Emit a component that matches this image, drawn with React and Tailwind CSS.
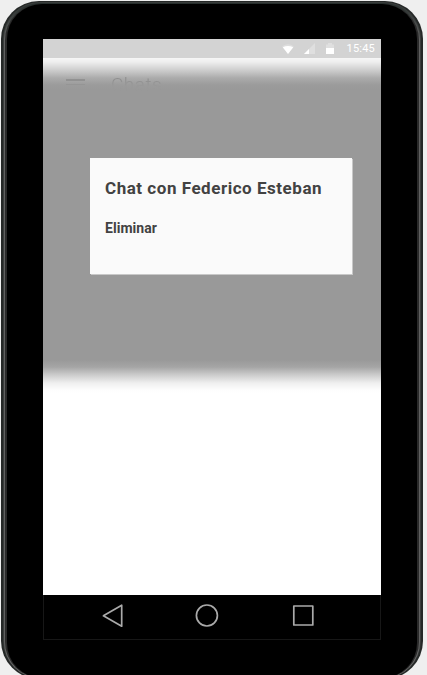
function StatusBar() {
  return (
    <div className="relative flex h-[19px] shrink-0 items-center justify-end bg-[#d3d3d3] pr-[6px] text-white">
      <svg className="mr-[9px] h-[12px] w-[14px]" viewBox="0 0 14 12">
        <path d="M1 3.4Q7-.8 13 3.4L7 11Z" fill="#dddddd" />
        <path d="M1.8 4.2Q7 1.8 12.2 4.2L7 11Z" fill="#fff" />
      </svg>
      <svg className="mr-[11px] h-[12px] w-[11px]" viewBox="0 0 11 12">
        <path d="M0 11L11 0V11Z" fill="#dfdfdf" />
        <path d="M0 11L5 6V11Z" fill="#fff" />
      </svg>
      <svg className="h-[12px] w-[8px]" viewBox="0 0 8 12">
        <path d="M0 5V1.5H2V0H6V1.5H8V5Z" fill="#dfdfdf" />
        <path d="M0 5H8V11H0Z" fill="#fff" />
      </svg>
      <span className="w-[41px] whitespace-nowrap pt-px text-right text-[11px] leading-[18px] tracking-[0.2px]">15:45</span>
    </div>
  );
}

function Dialog() {
  return (
    <div className="ml-[47px] mt-[100px] h-[116px] w-[262px] bg-[#fafafa] pl-[15px] pt-[20px] text-[#424242] shadow-[1px_1px_0_#c8c8c8]">
      <h1 className="whitespace-nowrap text-[17px] font-bold leading-[21px] tracking-[0.53px]">Chat con Federico Esteban</h1>
      <p className="mt-[19px] text-[14px] font-bold leading-[20px] tracking-[0.04px]">Eliminar</p>
    </div>
  );
}

function Screen() {
  return (
    <div className="relative flex h-[537px] flex-col bg-[linear-gradient(to_bottom,#f6f6f6_0px,#eeeeee_4px,#cecece_12px,#ababab_20px,#9b9b9b_27px,#999999_32px,#999999_302px,#a5a5a5_309px,#cccccc_317px,#efefef_325px,#fdfdfd_332px,#ffffff_336px)]">
      <div className="absolute left-[23px] top-[21px] h-[6px] w-[19px] border-t-2 border-b border-t-[#919191] border-b-[#959595]" />
      <div className="absolute left-[68px] top-[16px] bg-[linear-gradient(to_bottom,#8e8e8e_5px,#949494_9px,#999999_12px)] bg-clip-text text-[19px] font-light leading-[22px] tracking-[0.5px] text-transparent">Chats</div>
      <Dialog />
    </div>
  );
}

function Navigation() {
  return (
    <div className="flex h-[45px] items-start border border-t-0 border-[#171717] pt-[9px]">
      <svg className="ml-[58px] h-[24px] w-[22px]" viewBox="0 0 22 24" fill="none" stroke="#aaa" strokeWidth="1.7" strokeLinejoin="round">
        <path d="M1.4 11.8L19.7 1.2V22.2Z" />
      </svg>
      <svg className="ml-[71px] h-[24px] w-[24px]" viewBox="0 0 24 24" fill="none" stroke="#aaa" strokeWidth="1.7">
        <circle cx="11.9" cy="11.5" r="10.5" />
      </svg>
      <svg className="ml-[73px] h-[24px] w-[22px]" viewBox="0 0 22 24" fill="none" stroke="#aaa" strokeWidth="1.7" strokeLinejoin="round">
        <path d="M1.8 2H20.8V21H1.8Z" />
      </svg>
    </div>
  );
}

export default function App() {
  return (
    <div className="h-[675px] w-[427px] overflow-hidden bg-[#efefef] pl-px pt-px font-['Roboto',sans-serif]">
      <div className="h-[678px] w-[422px] rounded-[38px] bg-[#252827] px-[2px] py-px">
        <div className="h-full rounded-[37px] bg-[#3a3d3c] px-px pt-px">
          <div className="h-full rounded-[36px] bg-[linear-gradient(to_bottom,#252d2b,#606060_35px,#606060_640px,#737373)] px-px pt-px">
            <div className="h-full rounded-[36px] bg-[#2a2a2a] px-[2px]">
              <div className="h-full rounded-[35px] bg-black pl-[36px] pt-[35px]">
                <div className="w-[338px]">
                  <StatusBar />
                  <Screen />
                  <Navigation />
                </div>
              </div>
            </div>
          </div>
        </div>
      </div>
    </div>
  );
}
